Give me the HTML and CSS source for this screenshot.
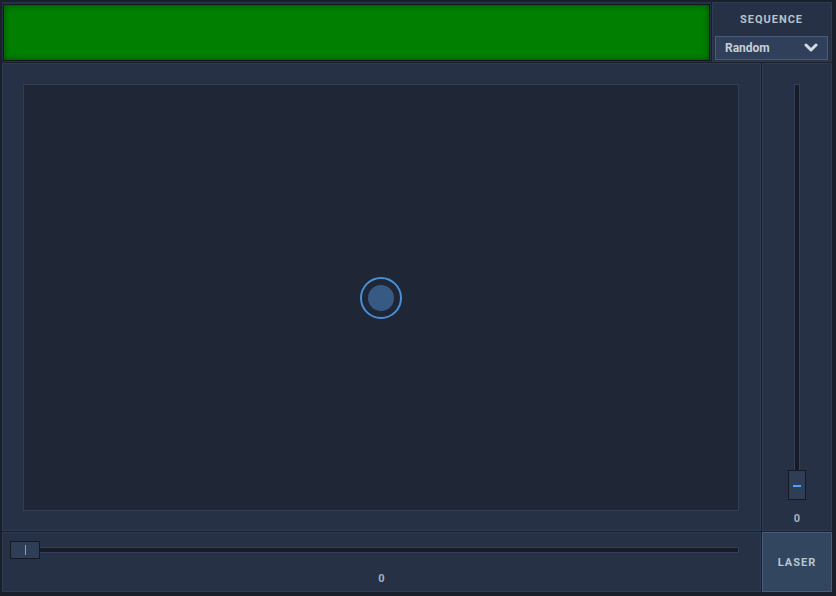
FILE: index.html
```html
<!DOCTYPE html>
<html lang="en">
<head>
    <meta charset="UTF-8">
    <meta name="viewport" content="width=device-width, initial-scale=1.0">
    <title>Laser Control</title>
    <link rel="stylesheet" href="styles.css">
</head>
<body>
    <div class="app">
        <div class="top">
            <div class="led-panel">
                <div class="led"></div>
            </div>
            <div class="seq-panel">
                <div class="seq-label">SEQUENCE</div>
                <div class="dropdown">
                    <span>Random</span>
                    <svg width="14" height="10" viewBox="0 0 14 10">
                        <polyline points="2,2 7,7 12,2" fill="none" stroke="#d4dbe4" stroke-width="3" stroke-linecap="round" stroke-linejoin="round"/>
                    </svg>
                </div>
            </div>
        </div>

        <div class="stage">
            <div class="xy-panel">
                <div class="xy-pad">
                    <div class="xy-point"><div class="xy-dot"></div></div>
                </div>
            </div>

            <div class="fader-panel">
                <div class="v-track"></div>
                <div class="v-handle"><span></span></div>
                <div class="value">0</div>
            </div>

            <div class="h-panel">
                <div class="h-fader">
                    <div class="h-handle"><span></span></div>
                    <div class="h-track"></div>
                </div>
                <div class="value">0</div>
            </div>

            <button class="laser">LASER</button>
        </div>
    </div>
</body>
</html>
```

FILE: styles.css
```css
html, body {
    margin: 0;
    height: 596px;
    overflow: hidden;
}
body {
    background-color: #1a1f2c;
    font-family: Roboto, 'Liberation Sans', sans-serif;
    color: #aab3c0;
}
.app {
    box-sizing: border-box;
    height: 100%;
    padding: 2px 4px 4px 2px;
    display: flex;
    flex-direction: column;
    gap: 1px;
}

/* top row */
.top {
    display: flex;
    height: 60px;
    gap: 1px;
}
.led-panel {
    width: 709px;
    box-sizing: border-box;
    padding: 2px 1px 1px 1px;
    background: #263145;
}
.led {
    height: 100%;
    box-sizing: border-box;
    border: 1px solid #121722;
    background: #007f00;
    box-shadow: inset 0 0 6px rgba(0, 0, 0, 0.4);
}
.seq-panel {
    flex: 1;
    box-sizing: border-box;
    padding: 0 3px 1px 2px;
    background: #263145;
    border: 1px solid #2e3a4f;
    display: flex;
    flex-direction: column;
}
.seq-label {
    height: 32px;
    padding-top: 1px;
    line-height: 32px;
    text-align: center;
    font-size: 11px;
    font-weight: bold;
    letter-spacing: 1px;
    color: #b9c1cc;
}
.dropdown {
    flex: 1;
    display: flex;
    align-items: center;
    justify-content: space-between;
    padding: 0 9px 0 9px;
    background: #30405a;
    border: 1px solid #4b5b75;
    font-size: 12px;
    font-weight: bold;
    color: #c6ced8;
}

/* main stage */
.stage {
    flex: 1;
    display: grid;
    grid-template-columns: 759px 70px;
    grid-template-rows: 468px 60px;
    gap: 1px;
}
.xy-panel,
.fader-panel,
.h-panel {
    box-sizing: border-box;
    background: #263145;
    border: 1px solid #2e3a4f;
}
.xy-panel {
    display: flex;
    padding: 20px 21px 19px 20px;
}
.xy-pad {
    flex: 1;
    background: #1f2636;
    border: 1px solid #323d53;
    display: flex;
    align-items: center;
    justify-content: center;
}
.xy-point {
    width: 38px;
    height: 38px;
    border: 2px solid #4a8fd6;
    border-radius: 50%;
    display: flex;
    align-items: center;
    justify-content: center;
}
.xy-dot {
    width: 26px;
    height: 26px;
    border-radius: 50%;
    background: #375a84;
}

/* vertical fader */
.fader-panel {
    display: flex;
    flex-direction: column;
    align-items: center;
    padding: 20px 0 5px 0;
}
.v-track {
    flex: 1;
    width: 4px;
    background: #161b27;
    border: 1px solid #34405a;
    border-bottom: none;
}
.v-handle,
.h-handle {
    box-sizing: border-box;
    background: #2f3e57;
    border: 1px solid #141a25;
    display: flex;
}
.v-handle {
    width: 18px;
    height: 30px;
    justify-content: center;
    padding-top: 14px;
}
.v-handle span {
    width: 8px;
    height: 2px;
    background: #4aa3ff;
}
.value {
    margin-top: 13px;
    line-height: 12px;
    font-size: 11px;
    font-weight: bold;
    color: #a9b1bd;
    text-align: center;
}

/* horizontal fader */
.h-panel {
    padding-top: 8px;
}
.h-fader {
    display: flex;
    align-items: center;
    margin: 0 21px 0 7px;
}
.h-handle {
    width: 30px;
    height: 18px;
    align-items: center;
    padding-left: 14px;
}
.h-handle span {
    width: 1px;
    height: 10px;
    background: #5aaaff;
}
.h-track {
    flex: 1;
    height: 4px;
    background: #161b27;
    border: 1px solid #34405a;
    border-left: none;
}
.h-panel .value {
    margin-top: 14px;
}

.laser {
    margin: 0;
    background: #33465f;
    border: 1px solid #4a5c78;
    color: #b8c5d3;
    font-family: Roboto, 'Liberation Sans', sans-serif;
    font-size: 11px;
    font-weight: bold;
    letter-spacing: 1px;
    cursor: pointer;
}
```
